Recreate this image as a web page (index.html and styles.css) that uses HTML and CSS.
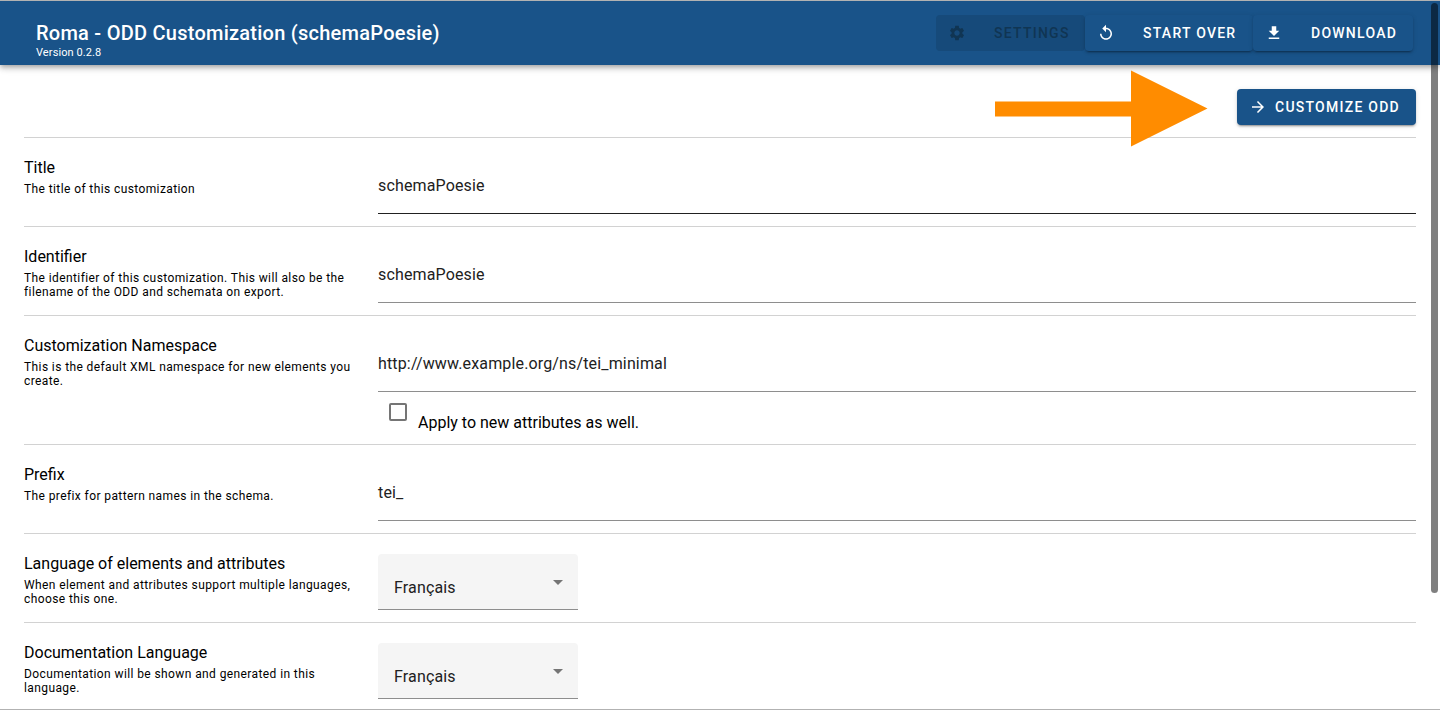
FILE: index.html
```html
<!DOCTYPE html>
<html lang="en">
<head>
<meta charset="utf-8">
<title>Roma - ODD Customization</title>
<link rel="stylesheet" href="styles.css">
</head>
<body>
<div class="app">
  <header class="topbar">
    <div class="brand">
      <div class="brand-title">Roma - ODD Customization (schemaPoesie)</div>
      <div class="brand-version">Version 0.2.8</div>
    </div>
    <nav class="actions">
      <button class="btn btn-settings" disabled>
        <svg class="icon" viewBox="0 0 24 24"><path d="M19.14 12.94c.04-.3.06-.61.06-.94 0-.32-.02-.64-.07-.94l2.03-1.58c.18-.14.23-.41.12-.61l-1.92-3.32c-.12-.22-.37-.29-.59-.22l-2.39.96c-.5-.38-1.03-.7-1.62-.94l-.36-2.54c-.04-.24-.24-.41-.48-.41h-3.84c-.24 0-.43.17-.47.41l-.36 2.54c-.59.24-1.13.57-1.62.94l-2.39-.96c-.22-.08-.47 0-.59.22L2.74 8.87c-.12.21-.08.47.12.61l2.03 1.58c-.05.3-.09.63-.09.94s.02.64.07.94l-2.03 1.58c-.18.14-.23.41-.12.61l1.92 3.32c.12.22.37.29.59.22l2.39-.96c.5.38 1.03.7 1.62.94l.36 2.54c.05.24.24.41.48.41h3.84c.24 0 .44-.17.47-.41l.36-2.54c.59-.24 1.13-.56 1.62-.94l2.39.96c.22.08.47 0 .59-.22l1.92-3.32c.12-.22.07-.47-.12-.61l-2.01-1.58zM12 15.6c-1.98 0-3.6-1.62-3.6-3.6s1.62-3.6 3.6-3.6 3.6 1.62 3.6 3.6-1.62 3.6-3.6 3.6z"/></svg>
        <span>Settings</span>
      </button>
      <button class="btn btn-restart">
        <svg class="icon" viewBox="0 0 24 24"><path d="M12 5V1L7 6l5 5V7c3.31 0 6 2.69 6 6s-2.69 6-6 6-6-2.69-6-6H4c0 4.42 3.58 8 8 8s8-3.58 8-8-3.58-8-8-8z"/></svg>
        <span>Start over</span>
      </button>
      <button class="btn btn-download">
        <svg class="icon" viewBox="0 0 24 24"><path d="M19 9h-4V3H9v6H5l7 7 7-7zM5 18v2h14v-2H5z"/></svg>
        <span>Download</span>
      </button>
    </nav>
  </header>

  <main class="content">
    <div class="toolbar">
      <button class="btn btn-customize">
        <svg class="icon" viewBox="0 0 24 24"><path d="M12 4l-1.41 1.41L16.17 11H4v2h12.17l-5.58 5.59L12 20l8-8z"/></svg>
        <span>Customize ODD</span>
      </button>
    </div>

    <section class="row">
      <div class="caption"><div class="label">Title</div><p class="hint">The title of this customization</p></div>
      <div class="control"><div class="field field-hover">schemaPoesie</div></div>
    </section>
    <section class="row">
      <div class="caption"><div class="label">Identifier</div><p class="hint">The identifier of this customization. This will also be the filename of the ODD and schemata on export.</p></div>
      <div class="control"><div class="field">schemaPoesie</div></div>
    </section>
    <section class="row">
      <div class="caption"><div class="label">Customization Namespace</div><p class="hint">This is the default XML namespace for new elements you create.</p></div>
      <div class="control">
        <div class="field">http://www.example.org/ns/tei_minimal</div>
        <div class="option"><span class="checkbox"></span><span class="option-label">Apply to new attributes as well.</span></div>
      </div>
    </section>
    <section class="row">
      <div class="caption"><div class="label">Prefix</div><p class="hint">The prefix for pattern names in the schema.</p></div>
      <div class="control"><div class="field">tei_</div></div>
    </section>
    <section class="row">
      <div class="caption"><div class="label">Language of elements and attributes</div><p class="hint">When element and attributes support multiple languages, choose this one.</p></div>
      <div class="control"><div class="select"><span class="select-value">Français</span><svg class="caret" viewBox="0 0 10 5"><path d="M0 0h10L5 5z"/></svg></div></div>
    </section>
    <section class="row">
      <div class="caption"><div class="label">Documentation Language</div><p class="hint">Documentation will be shown and generated in this language.</p></div>
      <div class="control"><div class="select"><span class="select-value">Français</span><svg class="caret" viewBox="0 0 10 5"><path d="M0 0h10L5 5z"/></svg></div></div>
    </section>
  </main>

  <svg class="pointer" viewBox="0 0 213 77"><path d="M0 31.5h136V.5l76.5 38L136 76.500V46.500H0z"/></svg>
  <div class="scroll-thumb"></div>
</div>
</body>
</html>
```

FILE: styles.css
```css
* { box-sizing: border-box; }

body {
  margin: 0;
  background: #fff;
  color: #000;
  font-family: Roboto, "Liberation Sans", sans-serif;
  overflow: hidden;
}

.app {
  position: relative;
  height: 710px;
  overflow: hidden;
  border-top: 1px solid #b2b2b2;
  border-bottom: 1px solid #b2b2b2;
}

.topbar {
  position: relative;
  display: flex;
  justify-content: space-between;
  align-items: flex-start;
  height: 64px;
  padding: 14px 27px 0 36px;
  background: #195389;
  color: #fff;
  box-shadow: 0 2px 4px -1px rgba(0,0,0,.2), 0 4px 5px rgba(0,0,0,.14), 0 1px 10px rgba(0,0,0,.12);
}

.brand { padding-top: 6px; }

.brand-title {
  font-size: 20px;
  font-weight: 500;
  line-height: 25px;
  letter-spacing: .25px;
  white-space: nowrap;
}

.brand-version {
  font-size: 11px;
  line-height: 13px;
  letter-spacing: .1px;
}

.actions { display: flex; }

.btn {
  display: flex;
  align-items: center;
  height: 36px;
  padding: 0 16px 0 12px;
  border: 0;
  border-radius: 4px;
  background: #195389;
  color: #fff;
  font: 500 14px/36px Roboto, "Liberation Sans", sans-serif;
  letter-spacing: 1.25px;
  text-transform: uppercase;
  white-space: nowrap;
  box-shadow: 0 3px 1px -2px rgba(0,0,0,.2), 0 2px 2px rgba(0,0,0,.14), 0 1px 5px rgba(0,0,0,.12);
}

.icon {
  flex: none;
  width: 18px;
  height: 18px;
  fill: currentColor;
}

.actions .btn { gap: 28px; }

.btn-settings {
  width: 149px;
  background: #164a7a;
  color: #103553;
  box-shadow: none;
}

.btn-restart { width: 168px; }
.btn-download { width: 160px; }

.btn-customize {
  gap: 8px;
  width: 179px;
}

.content { padding: 24px 24px 0; }

.toolbar {
  display: flex;
  justify-content: flex-end;
  height: 48px;
}

.row {
  display: flex;
  padding: 20px 0 12px;
  border-top: 1px solid #d2d2d2;
}

.caption {
  flex: none;
  width: 354px;
  padding-right: 24px;
}

.label {
  font-size: 16px;
  line-height: 19px;
}

.hint {
  margin: 5px 0 0;
  font-size: 12px;
  line-height: 14px;
  letter-spacing: .4px;
}

.control { flex: 1; }

.field {
  height: 56px;
  padding-top: 14px;
  border-bottom: 1px solid #8e8e8e;
  color: #212121;
  font-size: 16px;
  line-height: 28px;
  letter-spacing: .15px;
}

.field-hover { border-bottom-color: #212121; }

.option {
  display: flex;
  height: 40px;
  padding: 11px 0 0 11px;
}

.checkbox {
  width: 18px;
  height: 18px;
  border: 2px solid #757575;
  border-radius: 2px;
}

.option-label {
  margin-left: 11px;
  padding-top: 10px;
  font-size: 16px;
  line-height: 19px;
}

.select {
  display: flex;
  align-items: center;
  justify-content: space-between;
  width: 200px;
  height: 56px;
  padding: 0 15px 0 16px;
  border-bottom: 1px solid #8e8e8e;
  border-radius: 4px 4px 0 0;
  background: #f5f5f5;
  color: #212121;
  font-size: 16px;
}

.select-value {
  padding-top: 12px;
  line-height: 28px;
  letter-spacing: .15px;
}

.caret {
  width: 10px;
  height: 5px;
  margin-top: 2px;
  fill: #757575;
}

/* Annotation arrow laid over the page */
.pointer {
  position: absolute;
  top: 69px;
  left: 995px;
  width: 213px;
  height: 77px;
  fill: #ff8c00;
}

/* Overlay scrollbar thumb */
.scroll-thumb {
  position: absolute;
  top: 2px;
  right: 2px;
  width: 7px;
  height: 590px;
  border-radius: 4px;
  background: rgba(0,0,0,.5);
}
```
